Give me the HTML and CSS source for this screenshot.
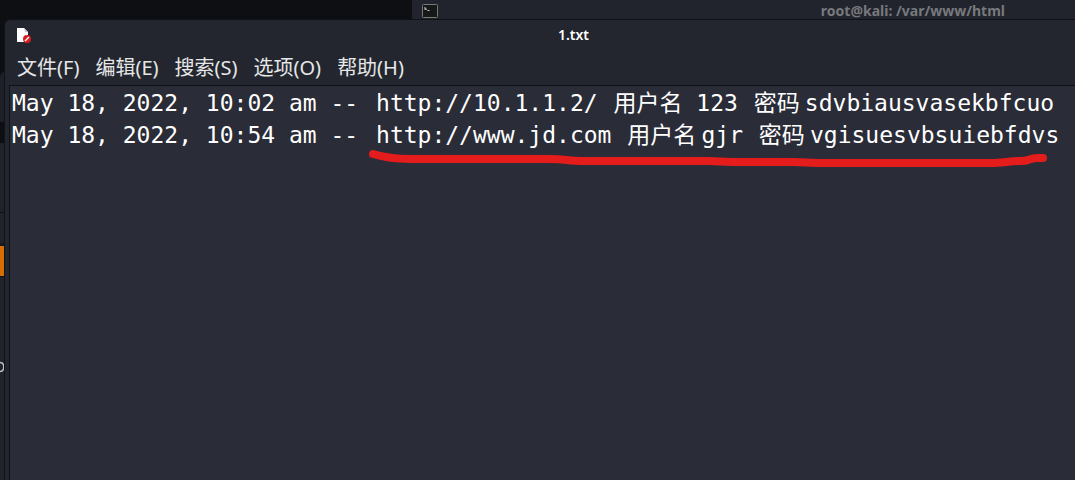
FILE: index.html
```html
<!DOCTYPE html>
<html lang="zh-CN">
<head>
<meta charset="utf-8">
<title>1.txt</title>
<link rel="stylesheet" href="styles.css">
</head>
<body>
<div class="desktop">
  <div class="side-window">
    <div class="side-head"></div>
    <div class="side-gap"></div>
    <div class="side-tools"></div>
    <div class="side-row"></div>
    <div class="side-selected"></div>
    <div class="side-body">
      <svg class="side-glyph" viewBox="0 0 4 12" aria-hidden="true">
        <path d="M0 1.500C5 1.500 5 10.500 0 10.500" fill="none" stroke="#b9c0c6" stroke-width="1.500"/>
      </svg>
    </div>
  </div>

  <div class="terminal">
    <svg class="terminal-icon" viewBox="0 0 16 14" aria-hidden="true">
      <rect x="0.5" y="0.5" width="15" height="13" rx="1" fill="#161819" stroke="#777977"/>
      <path d="M3 3v3M3 4.500l2 1M5.500 6.500h2" fill="none" stroke="#c8c8c8"/>
    </svg>
    <span class="terminal-title">root@kali: /var/www/html</span>
  </div>

  <main class="editor">
    <header class="titlebar">
      <svg class="file-icon" viewBox="0 0 16 16" aria-hidden="true">
        <path d="M1 1h7l4 4v10H1z" fill="#fff"/>
        <path d="M8 1l4 4H9z" fill="#c8c8c8"/>
        <circle cx="11" cy="12" r="4" fill="#d81d22"/>
        <path d="M9 14l4-4" stroke="#fff" stroke-width="1.300"/>
      </svg>
      <h1 class="title">1.txt</h1>
    </header>
    <nav class="menubar">
      <button class="menu" type="button">文件(F)</button>
      <button class="menu" type="button">编辑(E)</button>
      <button class="menu" type="button">搜索(S)</button>
      <button class="menu" type="button">选项(O)</button>
      <button class="menu" type="button">帮助(H)</button>
    </nav>
    <div class="document">
      <div class="text" role="textbox" aria-multiline="true" aria-label="1.txt" contenteditable="true" spellcheck="false"><div class="line"><span class="stamp">May 18, 2022, 10:02 am -- </span><span class="field">http://10.1.1.2/ </span><span class="field"><span class="han">用户名</span> 123 </span><span class="han">密码 </span>sdvbiausvasekbfcuo</div><div class="line"><span class="stamp">May 18, 2022, 10:54 am -- </span><span class="field">http://www.jd.com </span><span class="field"><span class="han">用户名 </span>gjr </span><span class="han">密码 </span>vgisuesvbsuiebfdvs</div></div>
      <svg class="marker" viewBox="0 0 680 20" aria-hidden="true">
        <path d="M5 6C15 9 28 11 42 11H183C195 11 202 13 216 13H340L365 14H425L450 15H622C634 15 642 13 652 13C663 13 660 10 670 10H675" fill="none" stroke="#e51c1c" stroke-width="8" stroke-linecap="round" stroke-linejoin="round"/>
      </svg>
    </div>
  </main>
</div>
</body>
</html>
```
FILE: styles.css
```css
* {
  box-sizing: border-box;
}

body {
  margin: 0;
  background: #0e0f12;
  font-family: "Noto Sans", "Noto Sans CJK SC", sans-serif;
}

.desktop {
  position: relative;
  height: 100vh;
  overflow: hidden;
}

.side-window {
  position: absolute;
  left: 0;
  top: 72px;
  bottom: 0;
  width: 5px;
  overflow: hidden;
}

.side-head {
  height: 50px;
  background: #1d2026;
  border-top-left-radius: 5px;
}

.side-gap {
  height: 21px;
  background: #0d0e11;
}

.side-tools {
  height: 70px;
  background: #20232a;
  border-bottom: 1px solid #0e0f14;
}

.side-row {
  height: 33px;
  background: #20232a;
  border-bottom: 3px solid #17191e;
}

.side-selected {
  height: 30px;
  background: #d66d05;
}

.side-body {
  height: 100%;
  padding-top: 84px;
  background: #20232a;
  border-top: 1px solid #0e0f14;
}

.side-glyph {
  display: block;
  width: 4px;
  height: 12px;
}

.terminal {
  position: absolute;
  left: 412px;
  right: 0;
  top: 0;
  display: flex;
  align-items: center;
  height: 22px;
  padding: 0 70px 0 10px;
  background: #21242c;
}

.terminal-icon {
  width: 16px;
  height: 14px;
}

.terminal-title {
  margin-left: auto;
  color: #77797d;
  font-size: 14px;
  font-weight: 700;
  line-height: 20px;
}

.editor {
  position: absolute;
  inset: 19px 0 0 4px;
  display: flex;
  flex-direction: column;
  background: #23262e;
  border-top: 1px solid #111217;
  border-left: 1px solid #111217;
  border-top-left-radius: 6px;
}

.titlebar {
  display: grid;
  grid-template-columns: 32px 1fr;
  align-items: center;
  height: 30px;
  padding-left: 11px;
}

.file-icon {
  width: 16px;
  height: 16px;
}

.title {
  margin: 0;
  padding-left: 24px;
  color: #fff;
  font-size: 14px;
  font-weight: 600;
  line-height: 20px;
  text-align: center;
}

.menubar {
  display: flex;
  gap: 16px;
  height: 35px;
  padding: 4px 12px;
}

.menu {
  padding: 0;
  border: 0;
  background: none;
  color: #e6e7e8;
  font: inherit;
  font-size: 20px;
  line-height: 28px;
}

.document {
  position: relative;
  flex: 1;
  margin-left: 4px;
  background: #2a2c37;
  border-top: 1px solid #101116;
  border-left: 1px solid #101116;
}

.text {
  height: 100%;
  padding: 1px 2px;
  outline: none;
  color: #fff;
  font-family: "DejaVu Sans Mono", monospace;
  font-size: 23px;
  line-height: 32px;
  white-space: pre;
}

.line {
  height: 32px;
}

.stamp {
  margin-right: 4px;
}

.field {
  margin-right: 2px;
}

.han {
  font-family: "Noto Sans CJK SC", sans-serif;
  line-height: 1;
}

.marker {
  position: absolute;
  left: 358px;
  top: 62px;
  width: 680px;
  height: 20px;
  pointer-events: none;
}
```
